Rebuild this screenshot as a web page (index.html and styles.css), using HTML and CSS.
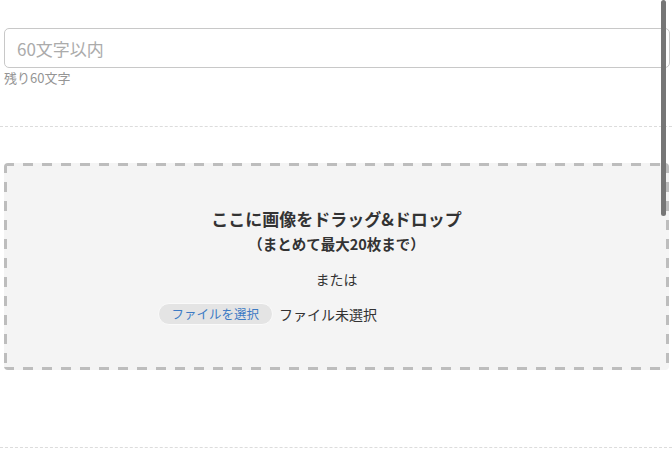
FILE: index.html
```html
<!DOCTYPE html>
<html lang="ja">
<head>
<meta charset="utf-8">
<title>画像アップロード</title>
<link rel="stylesheet" href="styles.css">
</head>
<body>
<div class="page">
  <section class="field">
    <input class="text-input" type="text" placeholder="60文字以内">
    <div class="counter">残り60文字</div>
  </section>
  <hr class="divider">
  <section class="dropzone">
    <div class="drop-title">ここに画像をドラッグ&amp;ドロップ</div>
    <div class="drop-sub">（まとめて最大20枚まで）</div>
    <div class="drop-or">または</div>
    <div class="file-row">
      <span class="file-btn">ファイルを選択</span>
      <span class="file-name">ファイル未選択</span>
    </div>
  </section>
  <hr class="divider divider-bottom">
</div>
<div class="scrollbar"></div>
</body>
</html>
```
FILE: styles.css
```css
html, body {
  margin: 0;
  padding: 0;
  background: #fff;
}
body {
  font-family: "Noto Sans CJK JP", "Noto Sans", sans-serif;
  color: #333;
  width: 672px;
  height: 460px;
  overflow: hidden;
  position: relative;
}
.page {
  display: flex;
  flex-direction: column;
}
.field {
  padding: 28px 2px 0 4px;
  display: flex;
  flex-direction: column;
}
.text-input {
  box-sizing: border-box;
  height: 40px;
  width: 100%;
  margin: 0;
  border: 1px solid #c8c8c8;
  border-radius: 5px;
  padding: 0 12px;
  font-family: inherit;
  font-size: 17px;
  color: #333;
  background: #fff;
  outline: none;
}
.text-input::placeholder {
  color: #ababab;
}
.counter {
  margin-top: 2px;
  font-size: 13px;
  line-height: 16px;
  color: #959595;
}
.divider {
  margin: 40px 0 0 0;
  border: 0;
  border-top: 1px dashed #dcdcdc;
  height: 0;
}
.dropzone {
  box-sizing: border-box;
  margin: 36px 3px 0 4px;
  height: 207px;
  border-radius: 4px;
  background:
    repeating-linear-gradient(90deg, #bdbdbd 0 10px, transparent 10px 19px) left top / 100% 3px no-repeat,
    repeating-linear-gradient(90deg, #bdbdbd 0 10px, transparent 10px 19px) left bottom / 100% 3px no-repeat,
    repeating-linear-gradient(180deg, #bdbdbd 0 10px, transparent 10px 19px) left top / 3px 100% no-repeat,
    repeating-linear-gradient(180deg, #bdbdbd 0 10px, transparent 10px 19px) right top / 3px 100% no-repeat,
    #f4f4f4;
  padding-top: 44px;
  display: flex;
  flex-direction: column;
  align-items: center;
}
.drop-title {
  font-size: 17px;
  font-weight: 700;
  line-height: 24px;
  color: #333;
}
.drop-sub {
  margin-top: 1px;
  font-size: 14.5px;
  font-weight: 700;
  line-height: 24px;
  color: #333;
}
.drop-or {
  margin-top: 12px;
  font-size: 14px;
  line-height: 22px;
  color: #333;
}
.file-row {
  margin-top: 13px;
  width: 358px;
  display: flex;
  align-items: center;
  gap: 6px;
  height: 22px;
}
.file-btn {
  box-sizing: border-box;
  height: 22px;
  padding: 0 13px;
  border: 1px solid #fafafa;
  border-radius: 11px;
  background: #e4e4e4;
  color: #3d7bc4;
  font-size: 12.5px;
  line-height: 20px;
}
.file-name {
  font-size: 14px;
  line-height: 22px;
  color: #333;
}
.divider-bottom {
  margin-top: 77px;
}
.scrollbar {
  position: absolute;
  left: 661px;
  top: 0;
  width: 5px;
  height: 216px;
  border-radius: 3px;
  background: #767676;
}
```
